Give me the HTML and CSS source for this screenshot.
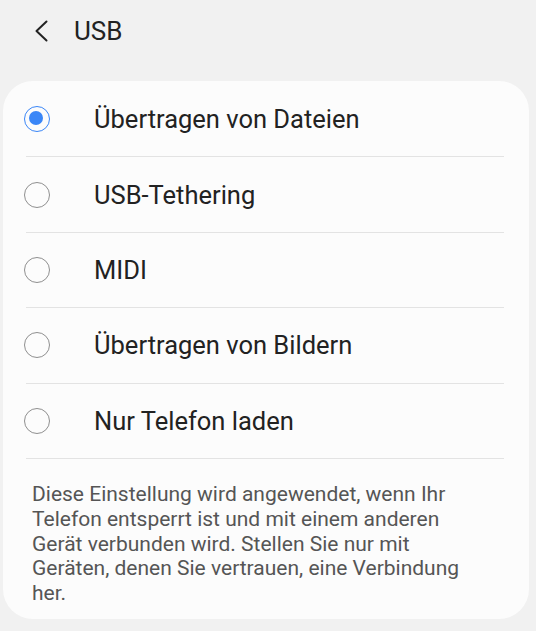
FILE: index.html
```html
<!DOCTYPE html>
<html lang="de">
<head>
<meta charset="utf-8">
<link rel="stylesheet" href="styles.css">
</head>
<body>
<header class="topbar">
  <svg class="back" width="14" height="22" viewBox="0 0 14 22"><path d="M12.5 1.5 L2.5 11 L12.5 20.5" fill="none" stroke="#222" stroke-width="2" stroke-linecap="round" stroke-linejoin="round"/></svg>
  <h1 class="title">USB</h1>
</header>
<main class="card">
  <ul class="options">
    <li class="option"><span class="radio checked"></span><span class="label">Übertragen von Dateien</span></li>
    <li class="option"><span class="radio"></span><span class="label">USB-Tethering</span></li>
    <li class="option"><span class="radio"></span><span class="label">MIDI</span></li>
    <li class="option"><span class="radio"></span><span class="label">Übertragen von Bildern</span></li>
    <li class="option"><span class="radio"></span><span class="label">Nur Telefon laden</span></li>
  </ul>
  <p class="note">Diese Einstellung wird angewendet, wenn Ihr Telefon entsperrt ist und mit einem anderen Gerät verbunden wird. Stellen Sie nur mit Geräten, denen Sie vertrauen, eine Verbindung her.</p>
</main>
</body>
</html>
```
FILE: styles.css
```css
html, body {
  margin: 0;
  padding: 0;
}
body {
  background: #f1f1f1;
  font-family: Roboto, "Noto Sans", "Liberation Sans", sans-serif;
  width: 536px;
  height: 631px;
  overflow: hidden;
}
.topbar {
  height: 81px;
  display: flex;
  align-items: center;
  padding-left: 34px;
  box-sizing: border-box;
  padding-bottom: 19px;
}
.back {
  display: block;
}
.title {
  margin: 0 0 0 26px;
  font-size: 26px;
  font-weight: 400;
  color: #222;
}
.card {
  display: block;
  margin: 0 7px 0 3px;
  background: #fcfcfc;
  border-radius: 30px;
  height: 538px;
  box-sizing: border-box;
  padding-top: 1px;
}
.options {
  list-style: none;
  margin: 0 25px 0 23px;
  padding: 0;
}
.option {
  display: flex;
  align-items: center;
  height: 75.4px;
  border-bottom: 1px solid #e3e3e3;
  box-sizing: border-box;
}
.radio {
  width: 26px;
  height: 26px;
  margin-left: -2px;
  box-sizing: border-box;
  border-radius: 50%;
  border: 1.5px solid #8f8f8f;
  flex: none;
  position: relative;
}
.radio.checked {
  border: 1.8px solid #3a86f7;
}
.radio.checked::after {
  content: "";
  position: absolute;
  left: 4.2px;
  top: 4.2px;
  width: 14px;
  height: 14px;
  border-radius: 50%;
  background: #3a86f7;
}
.label {
  margin-left: 44px;
  font-size: 25.5px;
  color: #222;
}
.note {
  margin: 23px 49px 0 29px;
  font-size: 21px;
  line-height: 24.8px;
  color: #555;
}
```
